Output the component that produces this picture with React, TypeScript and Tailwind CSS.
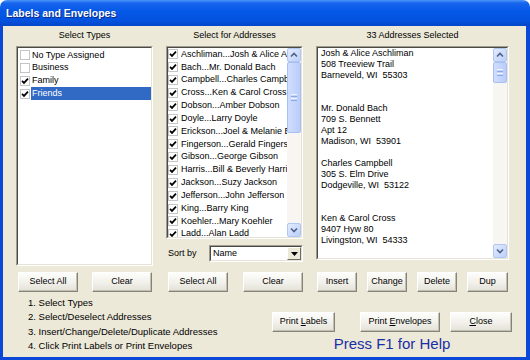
import React from "react";

const FONT = "font-['Liberation_Sans',Arial,sans-serif]";

function Check() {
  return (
    <svg width="8" height="8" viewBox="0 0 8 8">
      <path d="M1 3.8 L3 5.9 L7 1.6" fill="none" stroke="#000" strokeWidth="1.7" />
    </svg>
  );
}

function CheckBox({ checked }: { checked: boolean }) {
  return (
    <span className="w-[10px] h-[10px] border border-[#c5c5c5] bg-white flex items-center justify-center shrink-0">
      {checked && <Check />}
    </span>
  );
}

function Arrow({ up }: { up: boolean }) {
  return (
    <div className="w-full h-[14px] shrink-0 rounded-[2px] border border-[#b2c6f2] bg-[linear-gradient(135deg,#e2ebfe,#bcd0fb)] flex items-center justify-center">
      <svg width="8" height="6" viewBox="0 0 8 6">
        <path
          d={up ? "M1 4.5 L4 1.5 L7 4.5" : "M1 1.5 L4 4.5 L7 1.5"}
          fill="none"
          stroke="#4d6185"
          strokeWidth="1.6"
        />
      </svg>
    </div>
  );
}

function Thumb({ h }: { h: string }) {
  return (
    <div
      className={`${h} w-full shrink-0 rounded-[2px] border border-[#a8bff3] bg-[linear-gradient(90deg,#d0ddfd,#b9cdfb)] flex flex-col items-center justify-center gap-[1px]`}
    >
      <div className="w-[6px] h-[1px] bg-[#eef3ff]" />
      <div className="w-[6px] h-[1px] bg-[#8ea8e6]" />
      <div className="w-[6px] h-[1px] bg-[#eef3ff]" />
      <div className="w-[6px] h-[1px] bg-[#8ea8e6]" />
    </div>
  );
}

function ScrollBar({ thumb }: { thumb: string }) {
  return (
    <div className="w-[14px] h-full shrink-0 flex flex-col bg-[#f7f6f2]">
      <Arrow up />
      <Thumb h={thumb} />
      <div className="flex-1" />
      <Arrow up={false} />
    </div>
  );
}

function Sunken({ className, children }: { className: string; children: React.ReactNode }) {
  return (
    <div className={`${className} border border-t-[#a09d90] border-l-[#a09d90] border-b-white border-r-white`}>
      <div className="w-full h-full border border-t-[#4a4a44] border-l-[#4a4a44] border-b-[#e6e3d6] border-r-[#e6e3d6] bg-white overflow-hidden">
        {children}
      </div>
    </div>
  );
}

function Btn({ className, children }: { className: string; children: React.ReactNode }) {
  return (
    <div
      className={`${className} h-[20px] shrink-0 flex items-center justify-center text-[9px] text-black border border-t-white border-l-white border-b-[#85837a] border-r-[#85837a] bg-[linear-gradient(180deg,#fdfdfb,#f1f0ea_55%,#e3e1d6)] shadow-[inset_-1px_-1px_0_#c2bfb2]`}
    >
      {children}
    </div>
  );
}

const types: [string, boolean][] = [
  ["No Type Assigned", false],
  ["Business", false],
  ["Family", true],
  ["Friends", true],
];

const people = [
  "Aschliman...Josh & Alice Aschliman",
  "Bach...Mr. Donald Bach",
  "Campbell...Charles Campbell",
  "Cross...Ken & Carol Cross",
  "Dobson...Amber Dobson",
  "Doyle...Larry Doyle",
  "Erickson...Joel & Melanie Erickson",
  "Fingerson...Gerald Fingerson",
  "Gibson...George Gibson",
  "Harris...Bill & Beverly Harris",
  "Jackson...Suzy Jackson",
  "Jefferson...John Jefferson",
  "King...Barry King",
  "Koehler...Mary Koehler",
  "Ladd...Alan Ladd",
];

const addr = [
  "Josh & Alice Aschliman",
  "508 Treeview Trail",
  "Barneveld, WI  55303",
  "",
  "",
  "Mr. Donald Bach",
  "709 S. Bennett",
  "Apt 12",
  "Madison, WI  53901",
  "",
  "Charles Campbell",
  "305 S. Elm Drive",
  "Dodgeville, WI  53122",
  "",
  "",
  "Ken & Carol Cross",
  "9407 Hyw 80",
  "Livingston, WI  54333",
];

export default function App() {
  return (
    <div className={`w-[530px] h-[360px] flex flex-col ${FONT} text-black select-none`}>
      <div className="h-[26px] shrink-0 rounded-t-[7px] bg-[linear-gradient(180deg,#4a96f8_0%,#1764ee_12%,#0458e6_45%,#0452df_80%,#0446c6_100%)] flex items-center pl-[6px] pt-[2px]">
        <span className="text-white font-bold text-[10.5px] [text-shadow:1px_1px_0_#0b2a8a]">
          Labels and Envelopes
        </span>
      </div>
      <div className="flex-1 flex flex-col bg-[#ece9d8] border-l-[3px] border-r-[4px] border-b-[3px] border-[#0b48d8] pl-[13px]">
        <div className="flex">
          {/* Column 1 */}
          <div className="w-[137px] flex flex-col">
            <div className="h-[20px] flex items-center justify-center text-[9px]">Select Types</div>
            <Sunken className="h-[220px]">
              <div className="pt-[1px]">
                {types.map(([t, c]) => (
                  <div key={t} className="h-[12.8px] flex items-center pl-[2px] text-[9px]">
                    <CheckBox checked={c} />
                    <span
                      className={`ml-[1px] pl-[1px] flex-1 h-full flex items-center whitespace-nowrap ${
                        t === "Friends" ? "bg-[#316ac5] text-white" : ""
                      }`}
                    >
                      {t}
                    </span>
                  </div>
                ))}
              </div>
            </Sunken>
            <div className="mt-[6px] flex justify-between pl-[2px] pr-[1px]">
              <Btn className="w-[60px]">Select All</Btn>
              <Btn className="w-[60px]">Clear</Btn>
            </div>
          </div>

          {/* Column 2 */}
          <div className="ml-[13px] w-[137px] flex flex-col">
            <div className="h-[20px] flex items-center justify-center text-[9px]">Select for Addresses</div>
            <Sunken className="h-[193px]">
              <div className="flex h-full">
                <div className="flex-1 min-w-0 pt-[0px]">
                  {people.map((p) => (
                    <div key={p} className="h-[12.85px] flex items-center text-[9px]">
                      <CheckBox checked />
                      <span className="ml-[3px] whitespace-nowrap overflow-hidden">{p}</span>
                    </div>
                  ))}
                </div>
                <ScrollBar thumb="h-[71px]" />
              </div>
            </Sunken>
            <div className="mt-[6px] h-[17px] flex items-center">
              <span className="text-[9px] ml-[2px] w-[41px]">Sort by</span>
              <Sunken className="flex-1 h-[17px]">
                <div className="flex h-full items-center">
                  <span className="flex-1 text-[9px] pl-[2px]">Name</span>
                  <div className="w-[14px] h-full border border-t-white border-l-white border-b-[#6e6c62] border-r-[#6e6c62] bg-[#ece9d8] flex items-center justify-center">
                    <svg width="7" height="4" viewBox="0 0 7 4">
                      <path d="M0 0 H7 L3.5 4 Z" fill="#000" />
                    </svg>
                  </div>
                </div>
              </Sunken>
            </div>
            <div className="mt-[10px] flex justify-between pl-[2px]">
              <Btn className="w-[60px]">Select All</Btn>
              <Btn className="w-[60px]">Clear</Btn>
            </div>
          </div>

          {/* Column 3 */}
          <div className="ml-[13px] w-[193px] flex flex-col">
            <div className="h-[20px] flex items-center justify-center text-[9px]">33 Addresses Selected</div>
            <Sunken className="h-[214px]">
              <div className="flex h-full">
                <div className="flex-1 pl-[3px] text-[9px] leading-[11px]">
                  {addr.map((l, i) => (
                    <div key={i} className="h-[11px] whitespace-pre">
                      {l}
                    </div>
                  ))}
                </div>
                <ScrollBar thumb="h-[21px]" />
              </div>
            </Sunken>
            <div className="mt-[12px] flex gap-[10px] pl-[1px]">
              <Btn className="w-[40px]">Insert</Btn>
              <Btn className="w-[40px]">Change</Btn>
              <Btn className="w-[40px]">Delete</Btn>
              <Btn className="w-[41px]">Dup</Btn>
            </div>
          </div>
        </div>

        <div className="flex justify-between pr-[14px]">
          <div className="ml-[12px] mt-[4px] text-[9.5px] leading-[14.3px]">
            <div>1. Select Types</div>
            <div>2. Select/Deselect Addresses</div>
            <div>3. Insert/Change/Delete/Duplicate Addresses</div>
            <div>4. Click Print Labels or Print Envelopes</div>
          </div>
          <div className="flex flex-col">
            <div className="mt-[20px] flex">
              <Btn className="w-[63px]">
                <span>
                  Print <u>L</u>abels
                </span>
              </Btn>
              <Btn className="ml-[25px] w-[80px]">
                <span>
                  Print <u>E</u>nvelopes
                </span>
              </Btn>
              <Btn className="ml-[10px] w-[62px]">
                <span>
                  <u>C</u>lose
                </span>
              </Btn>
            </div>
            <div className="mt-[2px] text-center text-[15px] leading-[20px] text-[#1a2ea6]">Press F1 for Help</div>
          </div>
        </div>
      </div>
    </div>
  );
}
